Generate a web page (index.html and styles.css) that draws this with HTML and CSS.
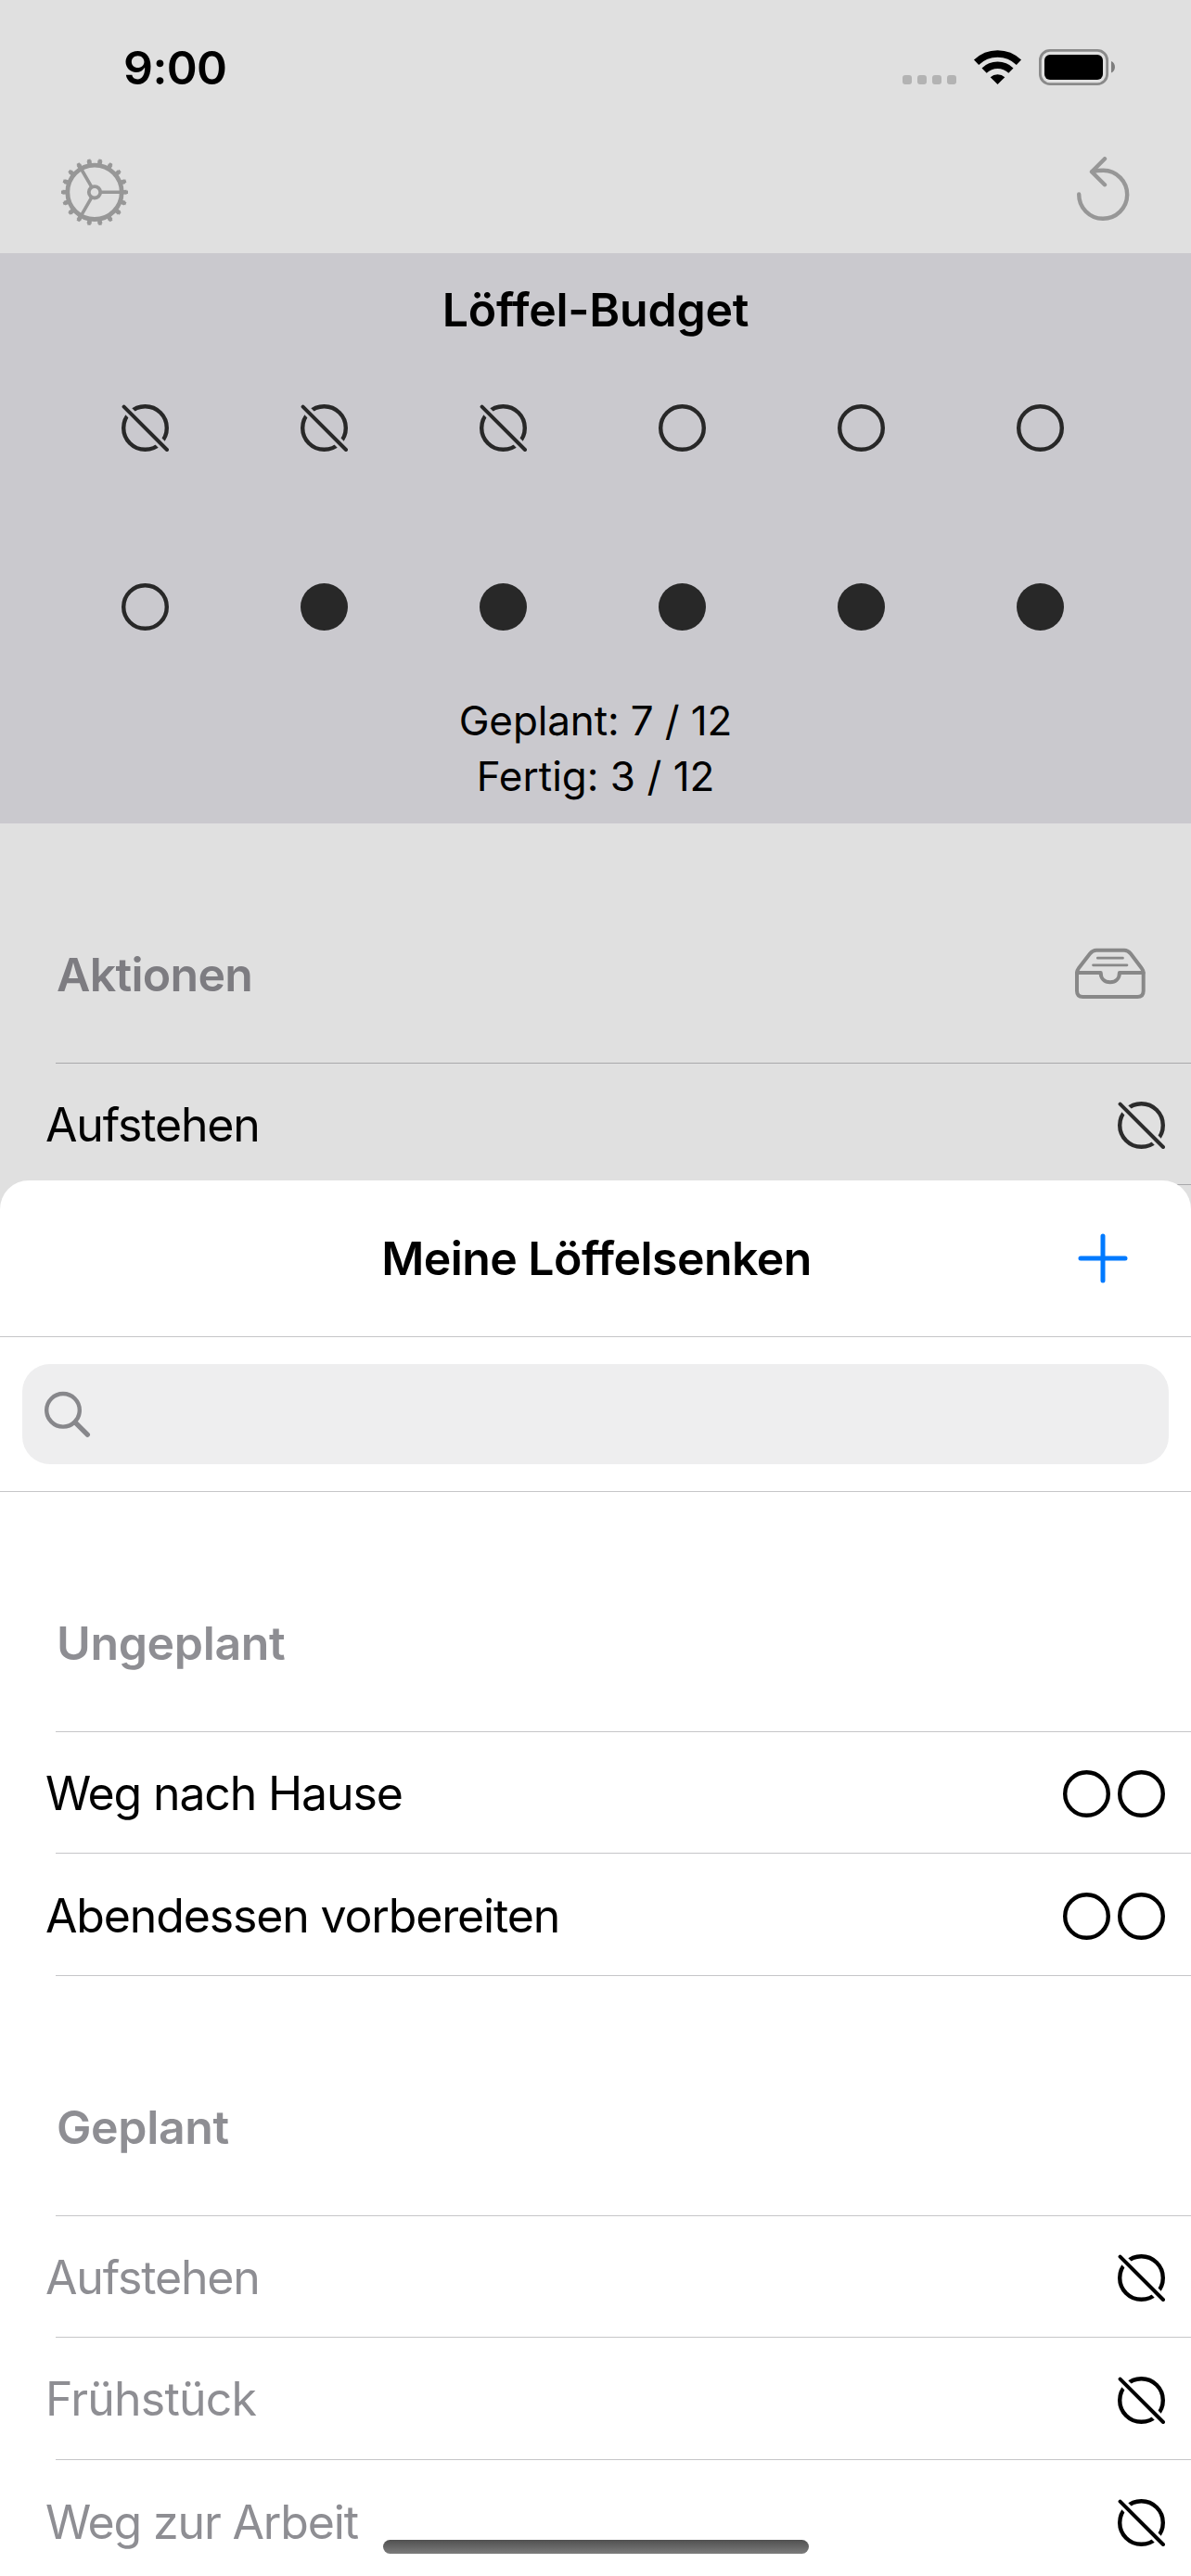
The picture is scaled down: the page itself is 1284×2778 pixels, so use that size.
FILE: index.html
```html
<!DOCTYPE html>
<html lang="de">
<head>
<meta charset="utf-8">
<title>Löffel-Budget</title>
<link rel="stylesheet" href="styles.css">
</head>
<body>
<svg class="defs" aria-hidden="true">
  <mask id="slash-gap" maskUnits="userSpaceOnUse" x="0" y="0" width="51" height="51">
    <rect width="51" height="51" fill="#fff"/>
    <path d="M-2-2 53 53" stroke="#000" stroke-width="10"/>
  </mask>
  <symbol id="open" viewBox="0 0 51 51">
    <circle cx="25.5" cy="25.5" r="23.3" fill="none" stroke="currentColor" stroke-width="4.4"/>
  </symbol>
  <symbol id="full" viewBox="0 0 51 51">
    <circle cx="25.5" cy="25.5" r="25.5" fill="currentColor"/>
  </symbol>
  <symbol id="done" viewBox="0 0 51 51">
    <circle cx="25.5" cy="25.5" r="23.3" fill="none" stroke="currentColor" stroke-width="4.4" mask="url(#slash-gap)"/>
    <path d="M2.6 2.6 49 49" stroke="currentColor" stroke-width="4" stroke-linecap="round"/>
  </symbol>
</svg>

<div class="screen">
  <div class="statusbar">
    <span class="time">9:00</span>
    <svg width="235" height="46" viewBox="970 50 235 46">
      <g fill="#b3b3b3">
        <rect x="973" y="81" width="10" height="10" rx="3"/>
        <rect x="989" y="81" width="10" height="10" rx="3"/>
        <rect x="1005" y="81" width="10" height="10" rx="3"/>
        <rect x="1021" y="81" width="10" height="10" rx="3"/>
      </g>
      <g fill="none" stroke="#000" stroke-width="7.5">
        <path d="M1052.6 67.3A32.9 32.9 0 0 1 1098.4 67.3"/>
        <path d="M1061.1 76.1A20.75 20.75 0 0 1 1089.9 76.1"/>
      </g>
      <path d="M1075.5 91 1067.7 83.2A12 12 0 0 1 1083.3 83.2Z"/>
      <rect x="1121.4" y="54.4" width="72.2" height="36.2" rx="10.5" fill="none" stroke="#8a8a8a" stroke-width="2.8"/>
      <rect x="1126" y="59" width="63" height="27" rx="6"/>
      <path d="M1198 66C1203.300 68 1203.300 76.500 1198 78.500Z" fill="#7d7d7d"/>
    </svg>
  </div>

  <div class="toolbar">
    <svg width="76" height="81" viewBox="64 169 76 81" fill="none" stroke="currentColor">
      <circle cx="102" cy="207.300" r="29.200" stroke-width="4.800"/>
      <circle cx="102" cy="207.300" r="32.800" stroke-width="3.600" pathLength="180" stroke-dasharray="4.200 5.800" stroke-dashoffset="2.100"/>
      <circle cx="102" cy="207.300" r="34.800" stroke-width="2.400" pathLength="180" stroke-dasharray="2.800 7.200" stroke-dashoffset="1.400"/>
      <circle cx="102" cy="207.300" r="6.200" stroke-width="3.800"/>
      <path stroke-width="3.600" d="M109 207.300H130M98.500 201.200 87.700 182.500M98.500 213.400 87.700 232.100"/>
    </svg>
    <svg width="64" height="81" viewBox="1157 169 64 81" fill="none" stroke="currentColor" stroke-width="4.400" stroke-linecap="round" stroke-linejoin="round">
      <path d="M1163.200 209.500A26 26 0 1 0 1189.500 183.800Q1183 183.800 1177.500 185"/>
      <path d="M1191 171.200 1177 185.200 1191 199.200"/>
    </svg>
  </div>

  <section class="budget">
    <h1 class="heading">Löffel-Budget</h1>
    <div class="spoons">
      <svg><use href="#done"/></svg><svg><use href="#done"/></svg><svg><use href="#done"/></svg>
      <svg><use href="#open"/></svg><svg><use href="#open"/></svg><svg><use href="#open"/></svg>
      <svg><use href="#open"/></svg><svg><use href="#full"/></svg><svg><use href="#full"/></svg>
      <svg><use href="#full"/></svg><svg><use href="#full"/></svg><svg><use href="#full"/></svg>
    </div>
    <p class="planned">Geplant: 7 / 12</p>
    <p class="finished">Fertig: 3 / 12</p>
  </section>

  <section class="list actions">
    <header class="list-header">
      <h2 class="tight">Aktionen</h2>
      <svg class="tray" width="76" height="60" viewBox="75 41 76 60" fill="none" stroke="currentColor" stroke-width="4" stroke-linecap="round" stroke-linejoin="round">
        <path d="M77 69.500Q77 66.500 79 64L91 48.500Q94 44.700 98 44.700H128Q132 44.700 135 48.500L146.700 64Q148.700 66.500 148.700 69.500V88.500Q148.700 95 142.200 95H83.500Q77 95 77 88.500Z"/>
        <path d="M77 69H102.700C102.700 75.500 107 79.300 112.800 79.300S122.900 75.500 122.900 69H148.700"/>
        <path stroke-width="2.700" d="M99.300 53.200H126.500M94.500 60.800H131"/>
      </svg>
    </header>
    <div class="row"><span>Aufstehen</span><div class="cost"><svg><use href="#done"/></svg></div></div>
  </section>
</div>

<div class="sheet">
  <header class="sheet-header">
    <h1 class="heading">Meine Löffelsenken</h1>
    <svg class="add" width="54" height="54" viewBox="0 0 54 54"><path d="M27 3V51M3 27H51" stroke="#007aff" stroke-width="5" stroke-linecap="round"/></svg>
  </header>
  <div class="search-bar">
    <div class="search">
      <svg width="52" height="54" viewBox="46 1498 52 54" fill="none" stroke="#87878b">
        <circle cx="68" cy="1520.800" r="17.800" stroke-width="4.400"/>
        <path d="M81 1533.800 94.300 1547.100" stroke-width="5.400" stroke-linecap="round"/>
      </svg>
    </div>
  </div>

  <section class="list">
    <header class="list-header"><h2>Ungeplant</h2></header>
    <div class="row"><span>Weg nach Hause</span><div class="cost"><svg><use href="#open"/></svg><svg><use href="#open"/></svg></div></div>
    <div class="row tall"><span>Abendessen vorbereiten</span><div class="cost"><svg><use href="#open"/></svg><svg><use href="#open"/></svg></div></div>
  </section>

  <section class="list">
    <header class="list-header"><h2>Geplant</h2></header>
    <div class="row muted"><span>Aufstehen</span><div class="cost"><svg><use href="#done"/></svg></div></div>
    <div class="row muted tall"><span class="wide">Frühstück</span><div class="cost"><svg><use href="#done"/></svg></div></div>
    <div class="row muted"><span>Weg zur Arbeit</span><div class="cost"><svg><use href="#done"/></svg></div></div>
  </section>
  <div class="home-indicator"></div>
</div>
</body>
</html>
```
FILE: styles.css
```css
* {
  box-sizing: border-box;
  margin: 0;
  padding: 0;
}

body {
  position: relative;
  width: 1284px;
  height: 2778px;
  overflow: hidden;
  background: #e0e0e0;
  color: #000;
  font: 400 50px/60px Inter, "Liberation Sans", sans-serif;
}

svg {
  display: block;
  flex: none;
}

.defs {
  position: absolute;
  width: 0;
  height: 0;
}

.statusbar {
  display: flex;
  align-items: center;
  justify-content: space-between;
  height: 146px;
  padding: 0 79px 0 133px;
}

.time {
  font-weight: 600;
  letter-spacing: -0.6px;
}

.toolbar {
  display: flex;
  align-items: center;
  justify-content: space-between;
  height: 127px;
  padding: 0 63px 0 64px;
  color: #979797;
}

.heading {
  font-size: 50px;
  font-weight: 600;
  letter-spacing: -0.55px;
  text-align: center;
}

.budget {
  height: 615px;
  padding-top: 31px;
  background: #cac9ce;
  text-align: center;
}

.budget .heading {
  letter-spacing: -0.24px;
}

.spoons {
  display: grid;
  grid-template-columns: repeat(6, 51px);
  gap: 142px;
  margin: 72px 0 67px;
  padding-left: 131px;
  color: #282828;
}

.spoons svg,
.cost svg {
  width: 51px;
  height: 51px;
}

.planned,
.finished {
  font-size: 44px;
}

.planned {
  letter-spacing: -0.12px;
}

.list-header {
  display: flex;
  align-items: center;
  justify-content: space-between;
  padding: 133px 49px 65px 61px;
  color: #8e8e93;
}

.list-header h2 {
  font-size: 50px;
  font-weight: 600;
  letter-spacing: -0.35px;
}

.list-header .tight {
  letter-spacing: -0.7px;
}

.tray {
  color: #888;
}

.row {
  display: flex;
  align-items: center;
  justify-content: space-between;
  height: 131px;
  padding: 2px 28px 0 49px;
  letter-spacing: -1.15px;
  background: linear-gradient(#c6c6c8, #c6c6c8) 60px 0 / 100% 1px no-repeat;
}

.row.tall {
  height: 132px;
}

.list .row:last-child {
  height: 133px;
  background:
    linear-gradient(#c6c6c8, #c6c6c8) 60px 0 / 100% 1px no-repeat,
    linear-gradient(#c6c6c8, #c6c6c8) 60px 100% / 100% 1px no-repeat;
}

.row .wide {
  letter-spacing: -0.8px;
}

.cost {
  display: flex;
  gap: 8px;
  padding-top: 2px;
}

.muted span {
  color: #8e8e93;
}

.actions .list-header {
  color: #7d7c81;
}

.actions .row:last-child {
  height: 132px;
  background:
    linear-gradient(#a9a9ab, #a9a9ab) 60px 0 / 100% 1px no-repeat,
    linear-gradient(#a9a9ab, #a9a9ab) 60px 100% / 100% 1px no-repeat;
}

.actions .cost {
  padding-top: 0;
  color: #2c2c2c;
}

/* Modal card covering the lower part of the screen */
.sheet {
  position: absolute;
  top: 1273px;
  right: 0;
  bottom: 0;
  left: 0;
  overflow: hidden;
  border-radius: 31px 31px 0 0;
  background: #fff;
}

.sheet-header {
  display: grid;
  grid-template-columns: 1fr auto 1fr;
  align-items: center;
  height: 169px;
  padding: 0 68px 0 70px;
  border-bottom: 1px solid #c6c6c8;
}

.sheet-header .heading {
  grid-column: 2;
}

.add {
  justify-self: end;
}

.search-bar {
  height: 167px;
  padding: 29px 24px;
  border-bottom: 1px solid #c6c6c8;
}

.search {
  display: flex;
  align-items: center;
  height: 108px;
  padding-left: 22px;
  border-radius: 30px;
  background: #eeeeef;
}

.home-indicator {
  position: absolute;
  bottom: 24px;
  left: 413px;
  width: 459px;
  height: 15px;
  border-radius: 8px;
  background: linear-gradient(#505050, #7c7c7c);
}
```
